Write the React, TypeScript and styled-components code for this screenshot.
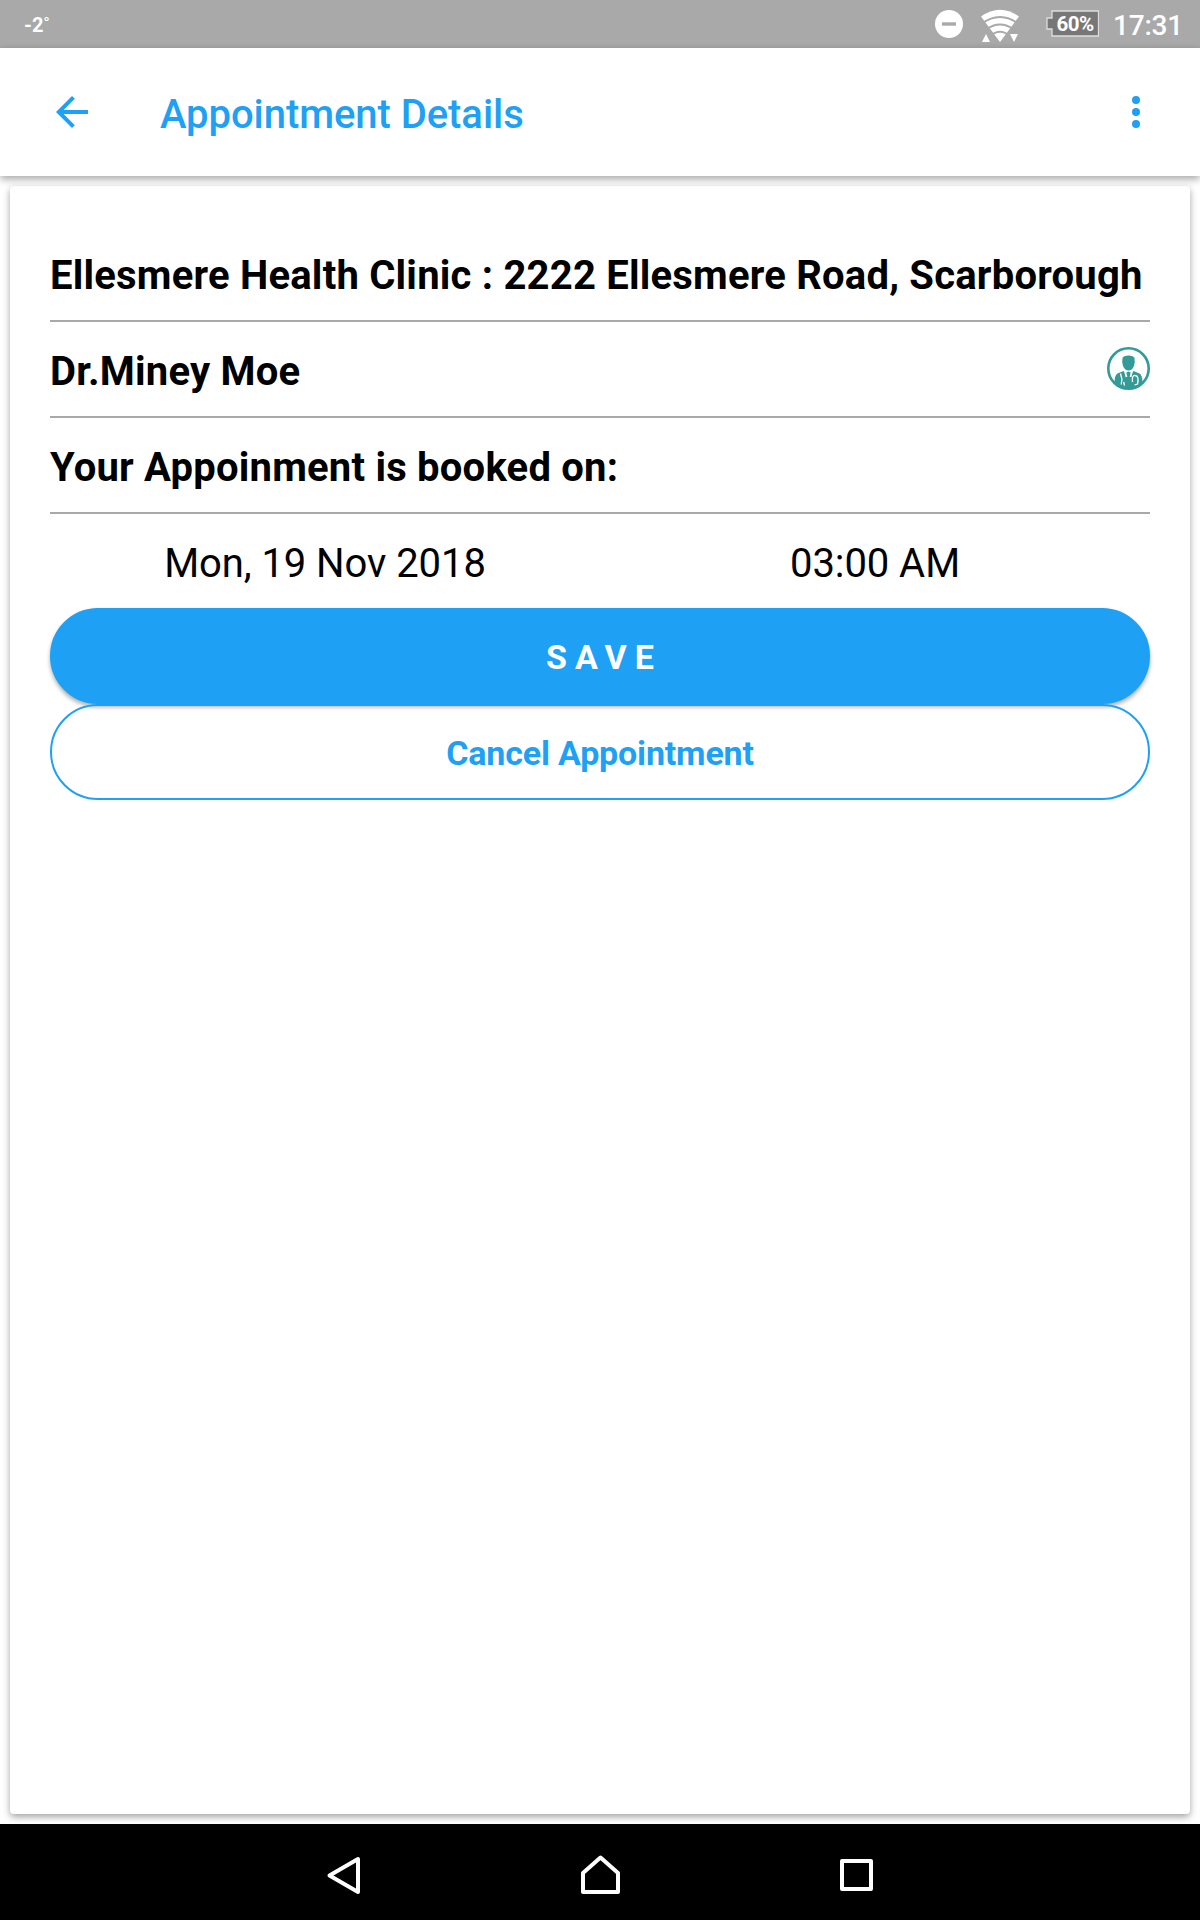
import React from 'react';
import styled, { createGlobalStyle } from 'styled-components';

const blue = '#1ea1f4';

const GlobalStyle = createGlobalStyle`
  * { box-sizing: border-box; }
  html, body { margin: 0; padding: 0; }
  body { background: #fff; font-family: Roboto, "Liberation Sans", sans-serif; }
  button { font: inherit; border: 0; padding: 0; background: none; }
  svg { display: block; flex: none; }
`;

const Screen = styled.div`
  width: 1200px;
  height: 1920px;
  display: flex;
  flex-direction: column;
  overflow: hidden;
  background: #fff;
`;

const StatusBar = styled.header`
  height: 48px;
  flex: none;
  display: flex;
  align-items: center;
  padding: 0 18px 0 24px;
  background: #a9a9a9;
  color: #fff;
`;

const Temperature = styled.span`
  font-size: 20px;
  font-weight: 700;
  line-height: 48px;
  margin-right: auto;
  padding-top: 2px;
`;

const StatusIcons = styled.div`
  display: flex;
  align-items: center;
`;

const WifiSlot = styled.div`
  margin-left: 17px;
`;

const BatterySlot = styled.div`
  margin-left: 26px;
  width: 53px;
`;

const Clock = styled.span`
  width: 69px;
  margin-left: 14px;
  font-size: 28px;
  font-weight: 500;
  line-height: 48px;
  letter-spacing: -0.2px;
  white-space: nowrap;
  padding-top: 3px;
`;

const AppBar = styled.nav`
  height: 128px;
  flex: none;
  display: flex;
  align-items: center;
  padding: 0 48px;
  background: #fff;
  color: ${blue};
  z-index: 1;
  box-shadow: 0 3px 8px rgba(0, 0, 0, 0.36);
`;

const Title = styled.h1`
  margin: 0 auto 0 64px;
  padding-top: 6px;
  font-size: 40px;
  line-height: 48px;
  font-weight: 500;
  letter-spacing: -0.06px;
`;

const IconButton = styled.button`
  width: 48px;
  height: 48px;
  color: ${blue};
`;

const Content = styled.main`
  flex: 1;
  display: flex;
  padding: 10px;
  overflow: hidden;
`;

const Card = styled.section`
  flex: 1;
  padding: 40px;
  border-radius: 4px;
  background: #fff;
  box-shadow: 0 3px 7px rgba(0, 0, 0, 0.36);
`;

const Row = styled.div`
  height: 96px;
  display: flex;
  align-items: center;
  justify-content: space-between;
  border-bottom: 2px solid #a9a9a9;
  font-size: 40px;
  font-weight: 700;
  letter-spacing: 0.21px;
  white-space: nowrap;
  color: #000;
`;

const RowText = styled.span`
  padding-top: 4px;
`;

const Slot = styled.div`
  height: 94px;
  padding-top: 4px;
  display: grid;
  grid-template-columns: 1fr 1fr;
  align-items: center;
  text-align: center;
  font-size: 40px;
  letter-spacing: -0.07px;
  color: #000;
`;

const PillButton = styled.button<{ $filled?: boolean }>`
  display: block;
  width: 100%;
  height: 96px;
  padding: 2px 0 0 ${(p) => (p.$filled ? '8px' : '0')};
  border-radius: 48px;
  font-size: 34px;
  font-weight: 700;
  color: ${(p) => (p.$filled ? '#fff' : blue)};
  background: ${(p) => (p.$filled ? blue : 'transparent')};
  border: 2px solid ${blue};
  letter-spacing: ${(p) => (p.$filled ? '8px' : '-0.17px')};
  box-shadow: ${(p) => (p.$filled ? '0 3px 4px rgba(0,0,0,0.32)' : 'none')};
`;

const NavBar = styled.footer`
  height: 96px;
  flex: none;
  display: flex;
  justify-content: center;
  align-items: center;
  gap: 208px;
  background: #000;
`;

function DoNotDisturbIcon() {
  return (
    <svg width="28" height="28" viewBox="0 0 28 28">
      <circle cx="14" cy="14" r="14" fill="#fff" />
      <path d="M7 14h14" stroke="#a9a9a9" strokeWidth="3.4" />
    </svg>
  );
}

function WifiIcon() {
  return (
    <svg width="40" height="36" viewBox="0 -3 40 36">
      <path d="M1 7.500Q20-6 39 7.500L20 33Z" fill="#fff" />
      <g fill="none" stroke="#a9a9a9" strokeWidth="1.900">
        <path d="M2 14.500Q20 1.500 38 14.500" />
        <path d="M6 20.500Q20 10.500 34 20.500" />
        <path d="M10 27Q20 18.500 30 27" />
      </g>
      <path d="M2 33l4-8 4 8zM30 25h8l-4 8z" fill="#fff" />
    </svg>
  );
}

function DoctorIcon() {
  return (
    <svg width="43" height="44" viewBox="0 0 43 44">
      <circle cx="21.500" cy="21.500" r="20.200" fill="#fff" stroke="#329b98" strokeWidth="2.600" />
      <g fill="#329b98">
        <path d="M15.500 11q1-2.500 6-2.500t6 2.500q.8 3.500-.5 8-2 4.500-5.500 4.500T16 19q-1.300-4.500-.5-8z" />
        <path d="M7.500 36q0-8 3-9.500l6-2.500 2 2 3-1.500 3 1.500 2-2 6 2.500q3 1.500 3 9.500-5 6-14 6t-14-6z" />
      </g>
      <g fill="none" stroke="#fff">
        <path d="M18 24l1.500 6M25 24l-1.500 6" strokeWidth="1.800" />
        <path d="M13.500 26.500l1.500 6M15 32l-.8 5.500M17.500 38.500l-.8-3.500M25.500 35q-.8-7 2.500-6.500 4.500.5 2.500 8.500l-3 1" strokeWidth="1.300" />
      </g>
    </svg>
  );
}

export default function App() {
  return (
    <>
      <GlobalStyle />
      <Screen>
        <StatusBar>
          <Temperature>-2˚</Temperature>
          <StatusIcons>
            <DoNotDisturbIcon />
            <WifiSlot>
              <WifiIcon />
            </WifiSlot>
            <BatterySlot>
              <svg width="53" height="28" viewBox="0 0 53 28">
                <path d="M6 1h46.500v25H6v-7H1V8h5z" fill="#777" stroke="#ddd" strokeWidth="1.300" />
                <text x="29" y="20.500" textAnchor="middle" fill="#fff" fontFamily="Roboto" fontSize="20.500" fontWeight="700" letterSpacing="-0.500">60%</text>
              </svg>
            </BatterySlot>
            <Clock>17:31</Clock>
          </StatusIcons>
        </StatusBar>
        <AppBar>
          <IconButton aria-label="Back">
            <svg width="48" height="48" viewBox="0 0 24 24" fill="currentColor">
              <path d="M20 11H7.830l5.590-5.590L12 4l-8 8 8 8 1.410-1.410L7.830 13H20v-2z" />
            </svg>
          </IconButton>
          <Title>Appointment Details</Title>
          <svg width="32" height="48" viewBox="0 0 32 48" fill="currentColor">
            <circle cx="16" cy="12" r="4" />
            <circle cx="16" cy="24" r="4" />
            <circle cx="16" cy="36" r="4" />
          </svg>
        </AppBar>
        <Content>
          <Card>
            <Row>
              <RowText>Ellesmere Health Clinic : 2222 Ellesmere Road, Scarborough</RowText>
            </Row>
            <Row>
              <RowText>Dr.Miney Moe</RowText>
              <DoctorIcon />
            </Row>
            <Row>
              <RowText>Your Appoinment is booked on:</RowText>
            </Row>
            <Slot>
              <span>Mon, 19 Nov 2018</span>
              <span>03:00 AM</span>
            </Slot>
            <PillButton $filled>SAVE</PillButton>
            <PillButton>Cancel Appointment</PillButton>
          </Card>
        </Content>
        <NavBar>
          <svg width="48" height="48" viewBox="0 0 48 48" fill="none" stroke="#fff" strokeWidth="4" strokeLinejoin="round">
            <path d="M38 11v33L9.500 27.500z" />
          </svg>
          <svg width="48" height="48" viewBox="0 0 48 48" fill="none" stroke="#fff" strokeWidth="4" strokeLinejoin="round">
            <path d="M24.500 9.500L42 25v19H7V25z" />
          </svg>
          <svg width="48" height="48" viewBox="0 0 48 48" fill="none" stroke="#fff" strokeWidth="4" strokeLinejoin="round">
            <path d="M10 13h29v28H10z" />
          </svg>
        </NavBar>
      </Screen>
    </>
  );
}
